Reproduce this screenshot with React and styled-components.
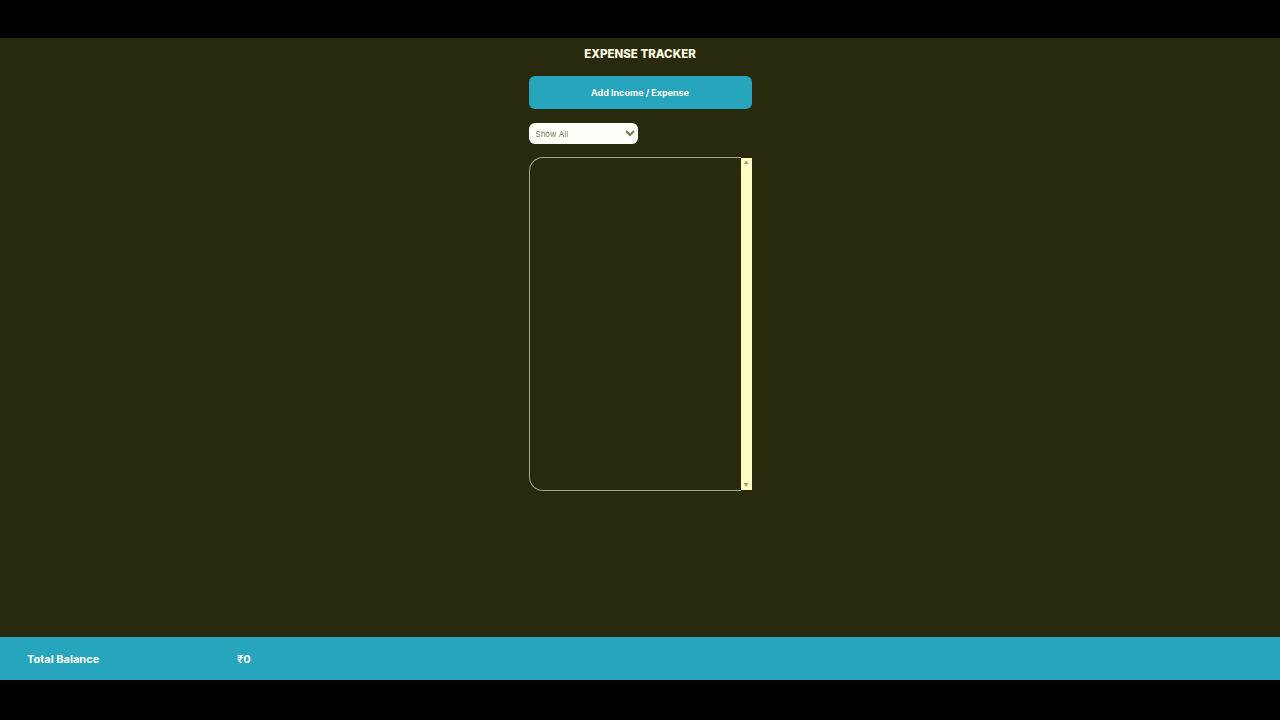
import styled, { createGlobalStyle } from "styled-components";

const GlobalStyle = createGlobalStyle`
  html, body {
    margin: 0;
    padding: 0;
    background: #000;
    font-family: Inter, "Noto Sans", sans-serif;
  }
`;

function App() {
  return (
    <>
      <GlobalStyle />
      <Frame>
        <Screen>
          <Main>
            <Title>EXPENSE TRACKER</Title>
            <AddButton>Add Income / Expense</AddButton>
            <Filter defaultValue="all">
              <option value="all">Show All</option>
              <option value="income">Income</option>
              <option value="expense">Expense</option>
            </Filter>
            <List>
              <Entries />
              <Rail>
                <Arrow>▲</Arrow>
                <Arrow>▼</Arrow>
              </Rail>
            </List>
          </Main>
          <Footer>
            <span>Total Balance</span>
            <span>₹0</span>
          </Footer>
        </Screen>
      </Frame>
    </>
  );
}

const Frame = styled.div`
  width: 1280px;
  height: 720px;
  padding: 38px 0 40px;
  box-sizing: border-box;
  background: #000;
`;

const Screen = styled.div`
  height: 100%;
  display: flex;
  flex-direction: column;
  background: #29290d;
`;

const Main = styled.main`
  flex: 1;
  width: 223px;
  margin: 0 auto;
  display: flex;
  flex-direction: column;
  align-items: stretch;
`;

const Title = styled.h1`
  margin: 9px 0 0;
  height: 15px;
  font-size: 11.5px;
  font-weight: 800;
  line-height: 15px;
  text-align: center;
  color: #fffbe0;
`;

const AddButton = styled.button`
  margin-top: 14px;
  height: 33px;
  border: none;
  border-radius: 6px;
  background: #26a5bd;
  color: #fff;
  font-family: inherit;
  font-size: 9px;
  font-weight: 700;
  cursor: pointer;
`;

const Filter = styled.select`
  margin-top: 14px;
  width: 109px;
  height: 21px;
  padding: 0 3px;
  border: none;
  border-radius: 6px;
  background: #fffef8;
  color: #7a7a50;
  font-family: inherit;
  font-size: 8px;
`;

const List = styled.div`
  margin-top: 13px;
  height: 334px;
  display: flex;
`;

const Entries = styled.div`
  flex: 1;
  border: 1px solid #aaa88a;
  border-right: none;
  border-radius: 14px 0 0 14px;
  overflow: hidden;
`;

const Rail = styled.div`
  width: 11px;
  margin: 1px 0;
  display: flex;
  flex-direction: column;
  justify-content: space-between;
  align-items: center;
  background: #fffcc4;
`;

const Arrow = styled.span`
  font-size: 5px;
  line-height: 9px;
  color: #9a9a8a;
`;

const Footer = styled.footer`
  height: 43px;
  box-sizing: border-box;
  display: grid;
  grid-template-columns: 210px auto;
  align-items: center;
  padding: 0 0 0 27px;
  background: #26a5bd;
  color: #fff;
  font-size: 11px;
  font-weight: 700;
`;

export default App;
